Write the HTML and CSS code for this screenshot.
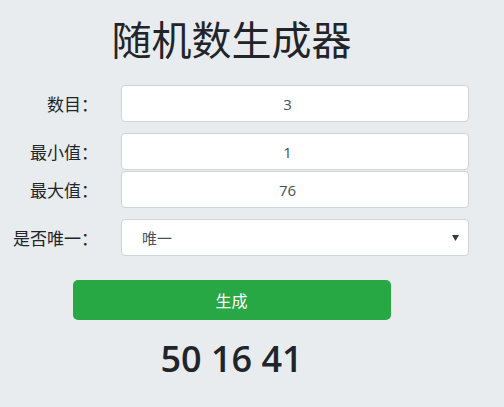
FILE: index.html
```html
<!DOCTYPE html>
<html lang="zh">
<head>
  <meta charset="UTF-8" />
  <meta name="viewport" content="width=device-width, initial-scale=1.0"/>
  <title>随机数生成器</title>
  <link rel="stylesheet" href="styles.css">
</head>
<body>
  <div id="app">
    <h1 id="title">随机数生成器</h1>

    <div class="form">
      <label class="form-label" for="count">数目：</label>
      <input class="form-control" id="count" type="number" value="3">

      <label class="form-label row-min" for="min">最小值：</label>
      <input class="form-control row-min" id="min" type="number" value="1">

      <label class="form-label row-max" for="max">最大值：</label>
      <input class="form-control row-max" id="max" type="number" value="76">

      <label class="form-label row-unique" for="unique">是否唯一：</label>
      <div class="select-wrap row-unique">
        <select class="form-control form-select" id="unique">
          <option>唯一</option>
          <option>不唯一</option>
        </select>
        <svg class="select-arrow" width="7" height="6" viewBox="0 0 7 6"><path d="M0 0H7L3.5 6Z" fill="#343a40"/></svg>
      </div>
    </div>

    <div class="center">
      <button id="generate">生成</button>
      <div id="result">50 16 41</div>
    </div>
  </div>
</body>
</html>
```

FILE: styles.css
```css
* {
  margin: 0;
  padding: 0;
  box-sizing: border-box;
}
html, body {
  width: 100%;
  height: 100%;
  overflow: hidden;
  background: #e9ecef;
  color: #212529;
  font-family: "Open Sans", "Noto Sans CJK SC", sans-serif;
}

#app {
  width: 469px;
  padding-top: 14px;
}

#title {
  width: 463px;
  text-align: center;
  font-family: "Noto Sans CJK SC", sans-serif;
  font-size: 40px;
  font-weight: 400;
  line-height: 48px;
}

.form {
  display: grid;
  grid-template-columns: 98px 348px;
  column-gap: 23px;
  row-gap: 11px;
  margin-top: 23px;
}

.form-label {
  display: flex;
  align-items: center;
  justify-content: flex-end;
  font-family: "Noto Sans CJK SC", sans-serif;
  font-size: 17px;
}

.row-max {
  margin-top: -10px;
}

.form-control {
  width: 100%;
  height: 37px;
  background: #fff;
  border: 1px solid #ced4da;
  border-radius: 4px;
  font-family: "Open Sans", "Noto Sans CJK SC", sans-serif;
  font-size: 15px;
  color: #495057;
  text-align: center;
  padding: 0;
  outline: none;
}

.select-wrap {
  position: relative;
}

.form-select {
  appearance: none;
  text-align: left;
  padding: 0 30px 0 20px;
  font-family: "Noto Sans CJK SC", sans-serif;
}

.select-arrow {
  position: absolute;
  right: 10px;
  top: 16px;
  pointer-events: none;
}

.center {
  width: 463px;
  display: flex;
  flex-direction: column;
  align-items: center;
}

#generate {
  width: 318px;
  height: 40px;
  margin-top: 24px;
  background: #28a745;
  color: #fff;
  border: none;
  border-radius: 5px;
  font-family: "Noto Sans CJK SC", sans-serif;
  font-size: 16px;
  cursor: pointer;
}

#result {
  margin-top: 17px;
  font-family: "Open Sans", sans-serif;
  font-size: 36px;
  font-weight: 600;
  line-height: 1.2;
}
```
